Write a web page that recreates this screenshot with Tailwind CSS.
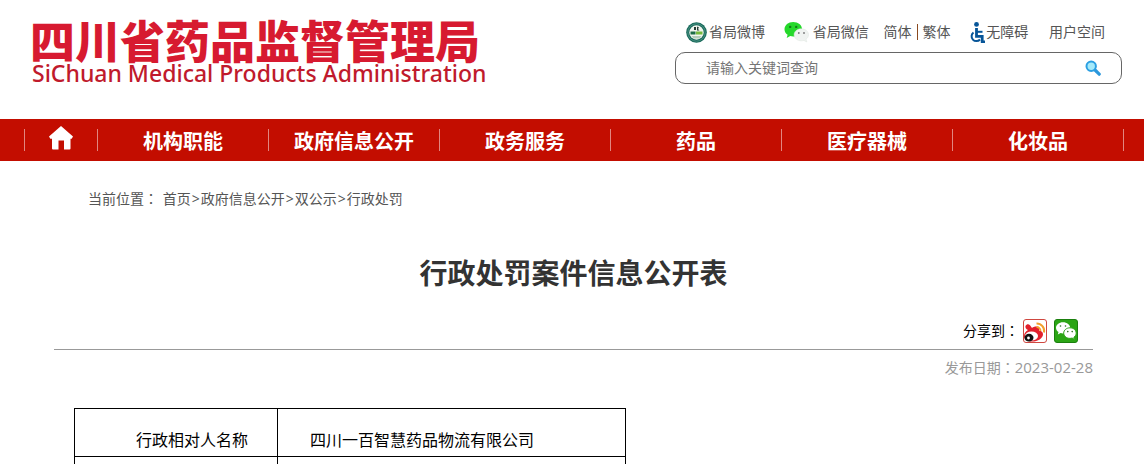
<!DOCTYPE html>
<html lang="zh-CN">
<head>
  <meta charset="UTF-8" />
  <meta name="viewport" content="width=device-width, initial-scale=1.0" />
  <title>行政处罚案件信息公开表</title>
  <script src="https://cdn.jsdelivr.net/npm/@tailwindcss/browser@4"></script>
</head>
<body class="h-screen overflow-hidden bg-white text-sm text-[#555] font-['Open_Sans','Noto_Sans_CJK_SC',sans-serif]">

  <header class="flex justify-between items-start pl-[30px] pr-[22px] h-[119px]">
    <a href="#" class="block pt-5 whitespace-nowrap">
      <span class="block text-[45px] leading-10 font-black text-[#d71a30] font-['Noto_Sans_CJK_SC',sans-serif]">四川省药品监督管理局</span>
      <span class="block pl-0.5 text-[23px] leading-[26px] font-medium text-[#c01a2c] font-['Noto_Sans',sans-serif]">SiChuan Medical Products Administration</span>
    </a>

    <div class="w-[447px] pt-5">
      <div class="flex items-center h-6 pl-[11px] pr-[17px] justify-between whitespace-nowrap">
        <a href="#" class="flex items-center gap-0.5">
          <svg class="w-[21px] h-[21px]" viewBox="0 0 21 21">
            <circle cx="10.500" cy="10.500" r="10.300" fill="#18695a" />
            <circle cx="10.500" cy="10.500" r="8.700" fill="none" stroke="#5fa294" stroke-width=".7" />
            <circle cx="10.500" cy="10.500" r="7.200" fill="#f0f5ee" />
            <path d="M8 5h2v3H8zM11 4.500l2 1-1 1.500 1.500 1.500H11z" fill="#263d36" />
            <path d="M4.500 9.500h5v3h-5z" fill="#1d6b46" />
            <path d="M10 9.500h6.500v3H10z" fill="#75b93c" />
            <path d="M5.500 14h10l-2 2.500h-6z" fill="#b5cdbb" />
          </svg>
          <span>省局微博</span>
        </a>
        <a href="#" class="flex items-center gap-1 ml-1">
          <svg class="w-[25px] h-[22px]" viewBox="0 0 25 22">
            <path d="M9.200 1C4.300 1 .5 4.200.5 8.200c0 2.300 1.200 4.200 3.100 5.500L2.700 17l3.500-1.900c1 .3 2 .4 3 .4 4.900 0 8.800-3.200 8.800-7.300S14.100 1 9.200 1z" fill="#25d82b" />
            <circle cx="6.200" cy="5.900" r="1.200" fill="#127c18" />
            <circle cx="12.200" cy="5.900" r="1.200" fill="#127c18" />
            <path d="M17.300 7.800c-4.100 0-7.200 2.700-7.200 6s3.100 6 7.200 6c.9 0 1.800-.1 2.600-.4l2.900 1.600-.8-2.700c1.500-1.100 2.500-2.700 2.500-4.500 0-3.300-3.100-6-7.200-6z" fill="#f0f3f1" stroke="#dce5df" stroke-width=".5" />
            <circle cx="14.800" cy="12" r=".9" fill="#777" />
            <circle cx="20" cy="12" r=".9" fill="#777" />
          </svg>
          <span>省局微信</span>
        </a>
        <span class="flex items-center gap-[5px]">
          <a href="#">简体</a>
          <span class="w-px h-4 bg-[#8a4a20]"></span>
          <a href="#">繁体</a>
        </span>
        <a href="#" class="flex items-center ml-1">
          <svg class="w-[17px] h-[21px]" viewBox="0 0 17 21">
            <circle cx="7.500" cy="2.400" r="2.400" fill="#075598" />
            <path d="M7.500 6v8.300h5.700V20H16" fill="none" stroke="#075598" stroke-width="2.800" />
            <path d="M8 9.800h5.500" fill="none" stroke="#075598" stroke-width="2" />
            <path d="M4.500 10.500a4.800 4.800 0 1 0 6.500 7" fill="none" stroke="#075598" stroke-width="2" />
          </svg>
          <span>无障碍</span>
        </a>
        <a href="#" class="ml-1.5">用户空间</a>
      </div>

      <form class="flex items-center mt-2 h-8 pl-[30px] pr-5 border border-[#666] rounded-[10px]">
        <input type="text" aria-label="关键词" placeholder="请输入关键词查询" class="flex-1 min-w-0 outline-none placeholder:text-[#757575]" />
        <button type="submit" aria-label="查询">
          <svg class="w-4 h-4" viewBox="0 0 16 16">
            <path d="M9.500 9.500l4.700 4.700" stroke="#2b97dc" stroke-width="3.200" stroke-linecap="round" />
            <circle cx="6.200" cy="6.200" r="4.700" fill="#a5eafa" stroke="#2b9fe2" stroke-width="2" />
          </svg>
        </button>
      </form>
    </div>
  </header>

  <nav class="bg-[#c30d00] pl-6 pr-5 h-[42px] flex items-center text-white text-xl leading-[26px] font-bold text-center whitespace-nowrap">
    <a href="#" aria-label="首页" class="w-[73px] h-[22px] flex justify-center items-center border-l border-white/50">
      <svg class="w-6 h-6 mb-1 shrink-0" viewBox="0 0 24 24" fill="#fff">
        <path d="M12 0l12 10.500-1.300 2.200H21.500V22.500q0 1-1 1H15v-9H9.500v9H4q-1 0-1-1v-9.800H1.300L0 10.500z" />
      </svg>
    </a>
    <a href="#" class="flex-1 h-[22px] border-l border-white/50">机构职能</a>
    <a href="#" class="flex-1 h-[22px] border-l border-white/50">政府信息公开</a>
    <a href="#" class="flex-1 h-[22px] border-l border-white/50">政务服务</a>
    <a href="#" class="flex-1 h-[22px] border-l border-white/50">药品</a>
    <a href="#" class="flex-1 h-[22px] border-l border-white/50">医疗器械</a>
    <a href="#" class="flex-1 h-[22px] border-x border-white/50">化妆品</a>
  </nav>

  <main class="pl-[54px] pr-[51px]">
    <div class="pt-7 pl-[34px] leading-5">
      当前位置<span lang="zh-TW" class="leading-none font-['Noto_Sans_CJK_TC',sans-serif]">：</span>
      <a href="#" class="mx-px">首页</a>&gt;<a href="#" class="mx-px">政府信息公开</a>&gt;<a href="#" class="mx-px">双公示</a>&gt;<a href="#" class="mx-px">行政处罚</a>
    </div>

    <h1 class="mt-11 text-center text-[28px] leading-10 font-bold text-[#333]">行政处罚案件信息公开表</h1>

    <div class="mt-[26px] pr-[15px] pb-1.5 flex justify-end items-center border-b border-[#999] text-black">
      <span>分享到<span lang="zh-TW" class="leading-none font-['Noto_Sans_CJK_TC',sans-serif]">：</span></span>
      <a href="#" aria-label="新浪微博" class="ml-1">
        <svg class="w-6 h-6" viewBox="0 0 24 24">
          <rect x=".5" y=".5" width="23" height="23" rx="2.500" fill="#fff" stroke="#cf4840" />
          <path d="M2.500 7c1-1.800 3-2.200 4.500-.8L9 9c2-1.500 5-2 6.500-.5 1 1 .8 2 .5 3 2.500.3 4 1.700 4 3.700 0 4-5 7.300-11 7.300-4.500 0-8-2-8-5.500C1 14.500 2.500 12.500 5 11 3 10 2 8.500 2.500 7z" fill="#e2202c" />
          <ellipse cx="8.500" cy="17" rx="6.500" ry="4.500" fill="#fff" />
          <ellipse cx="6" cy="18.700" rx="4.500" ry="3.900" fill="#111" />
          <circle cx="5.500" cy="19" r="1.400" fill="#fff" />
          <path d="M13.500 4.500a7.500 7.500 0 0 1 7.500 9" fill="none" stroke="#f3a02c" stroke-width="2" />
          <path d="M13.500 8a4 4 0 0 1 4 4" fill="none" stroke="#f3a02c" stroke-width="1.800" />
        </svg>
      </a>
      <a href="#" aria-label="微信" class="ml-[7px]">
        <svg class="w-6 h-6" viewBox="0 0 24 24">
          <rect x=".5" y=".5" width="23" height="23" rx="2.500" fill="#2ba515" stroke="#1b7f0e" />
          <path d="M9 3.200c-4 0-7 2.500-7 5.600 0 1.800 1 3.300 2.500 4.300l-.7 2.400 2.800-1.400c.8.200 1.600.3 2.400.3 4 0 7.200-2.500 7.200-5.600S13 3.200 9 3.200z" fill="#fff" />
          <path d="M16 8.800c-3.500 0-6.300 2.400-6.300 5.300s2.800 5.300 6.300 5.300c.8 0 1.500-.1 2.200-.3l2.300 1.300-.6-2.200c1.400-1 2.300-2.400 2.300-4.100 0-2.900-2.700-5.300-6.200-5.300z" fill="#fff" stroke="#2ba515" stroke-width="1" />
          <g fill="#276b1c">
            <circle cx="6.500" cy="7" r=".8" />
            <circle cx="11.500" cy="7" r=".8" />
            <circle cx="13.800" cy="12.600" r=".8" />
            <circle cx="18.200" cy="12.600" r=".8" />
          </g>
        </svg>
      </a>
    </div>
    <p class="mt-2 text-right leading-5 text-[#999]">发布日期<span lang="zh-TW" class="leading-none font-['Noto_Sans_CJK_TC',sans-serif]">：</span><span class="text-[15px] leading-none">2023-02-28</span></p>

    <table class="mt-[30px] ml-5 w-[552px] table-fixed border-collapse text-base leading-6 text-black">
      <tbody>
        <tr class="h-12">
          <th scope="row" class="w-[203px] border border-black pt-3.5 pr-[29px] font-normal text-right">行政相对人名称</th>
          <td class="border border-black pt-3.5 pl-8">四川一百智慧药品物流有限公司</td>
        </tr>
        <tr class="h-12">
          <th scope="row" class="border border-black"></th>
          <td class="border border-black"></td>
        </tr>
      </tbody>
    </table>
  </main>

</body>
</html>
